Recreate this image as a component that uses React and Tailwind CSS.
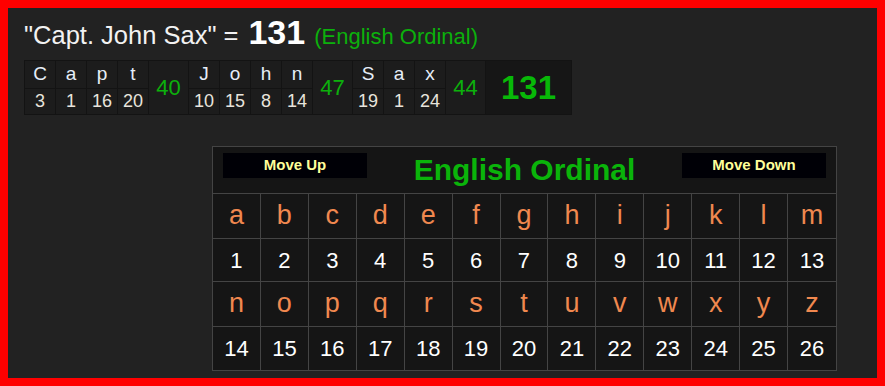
const words = [
  { letters: ['C', 'a', 'p', 't'], values: [3, 1, 16, 20], sum: 40 },
  { letters: ['J', 'o', 'h', 'n'], values: [10, 15, 8, 14], sum: 47 },
  { letters: ['S', 'a', 'x'], values: [19, 1, 24], sum: 44 },
]

const alphabet = 'abcdefghijklmnopqrstuvwxyz'.split('')

function LetterRow({ letters, start }) {
  return (
    <>
      {letters.map((l, i) => (
        <div
          key={'l' + l}
          className={`h-[45px] flex items-center justify-center border-b border-[#444] text-[27px] text-[#f0884f] pb-[2px] ${i < 12 ? 'border-r' : ''}`}
        >
          {l}
        </div>
      ))}
      {letters.map((l, i) => (
        <div
          key={'n' + l}
          className={`h-[43px] flex items-center justify-center text-[22px] text-white ${i < 12 ? 'border-r border-[#444]' : ''} ${start === 0 ? 'border-b border-[#444]' : ''}`}
        >
          {start + i + 1}
        </div>
      ))}
    </>
  )
}

export default function App() {
  return (
    <div className="h-[386px] w-[885px] border-8 border-[#ff0000] bg-[#222222] font-['Liberation_Sans',Arial,sans-serif] overflow-hidden">
      <div className="pl-[16px] pt-[7px]">
        <div className="flex items-baseline h-[32px] leading-none">
          <span className="text-[25.5px] text-[#f2f2f2]">"Capt. John Sax" =</span>
          <span className="ml-[10px] text-[34px] font-bold text-white">131</span>
          <span className="ml-[9px] text-[22px] text-[#0cb00c]">(English Ordinal)</span>
        </div>

        <div className="mt-[13px] flex w-fit border border-[#131313] bg-[#1c1c1c]">
          {words.map((w, wi) => (
            <div key={wi} className="flex">
              {w.letters.map((l, i) => (
                <div key={i} className="flex w-[31px] flex-col border-r border-[#131313]">
                  <div className="flex h-[28px] items-center justify-center border-b border-[#131313] text-[19px] text-[#e6eef8]">
                    {l}
                  </div>
                  <div className="flex h-[25px] items-center justify-center text-[18px] text-[#e8e4dc]">
                    {w.values[i]}
                  </div>
                </div>
              ))}
              <div className="flex w-[40px] items-center justify-center border-r border-[#131313] text-[22px] text-[#0cb00c]">
                {w.sum}
              </div>
            </div>
          ))}
          <div className="flex w-[85px] items-center justify-center bg-[#161616] text-[33px] font-bold text-[#08b808]">
            131
          </div>
        </div>

        <div className="mt-[31px] ml-[188px] w-[625px] border border-[#444] bg-[#151515]">
          <div className="flex h-[47px] justify-between border-b border-[#444] px-[10px]">
            <button className="mt-[6px] h-[25px] w-[144px] bg-[#000006] text-[15px] font-bold text-[#ffff99]">
              Move Up
            </button>
            <div className="self-center pb-[2px] text-[30px] font-bold text-[#0ab40a]">English Ordinal</div>
            <button className="mt-[6px] h-[25px] w-[144px] bg-[#000006] text-[15px] font-bold text-[#ffff99]">
              Move Down
            </button>
          </div>
          <div className="grid grid-cols-13">
            <LetterRow letters={alphabet.slice(0, 13)} start={0} />
            <LetterRow letters={alphabet.slice(13)} start={13} />
          </div>
        </div>
      </div>
    </div>
  )
}
